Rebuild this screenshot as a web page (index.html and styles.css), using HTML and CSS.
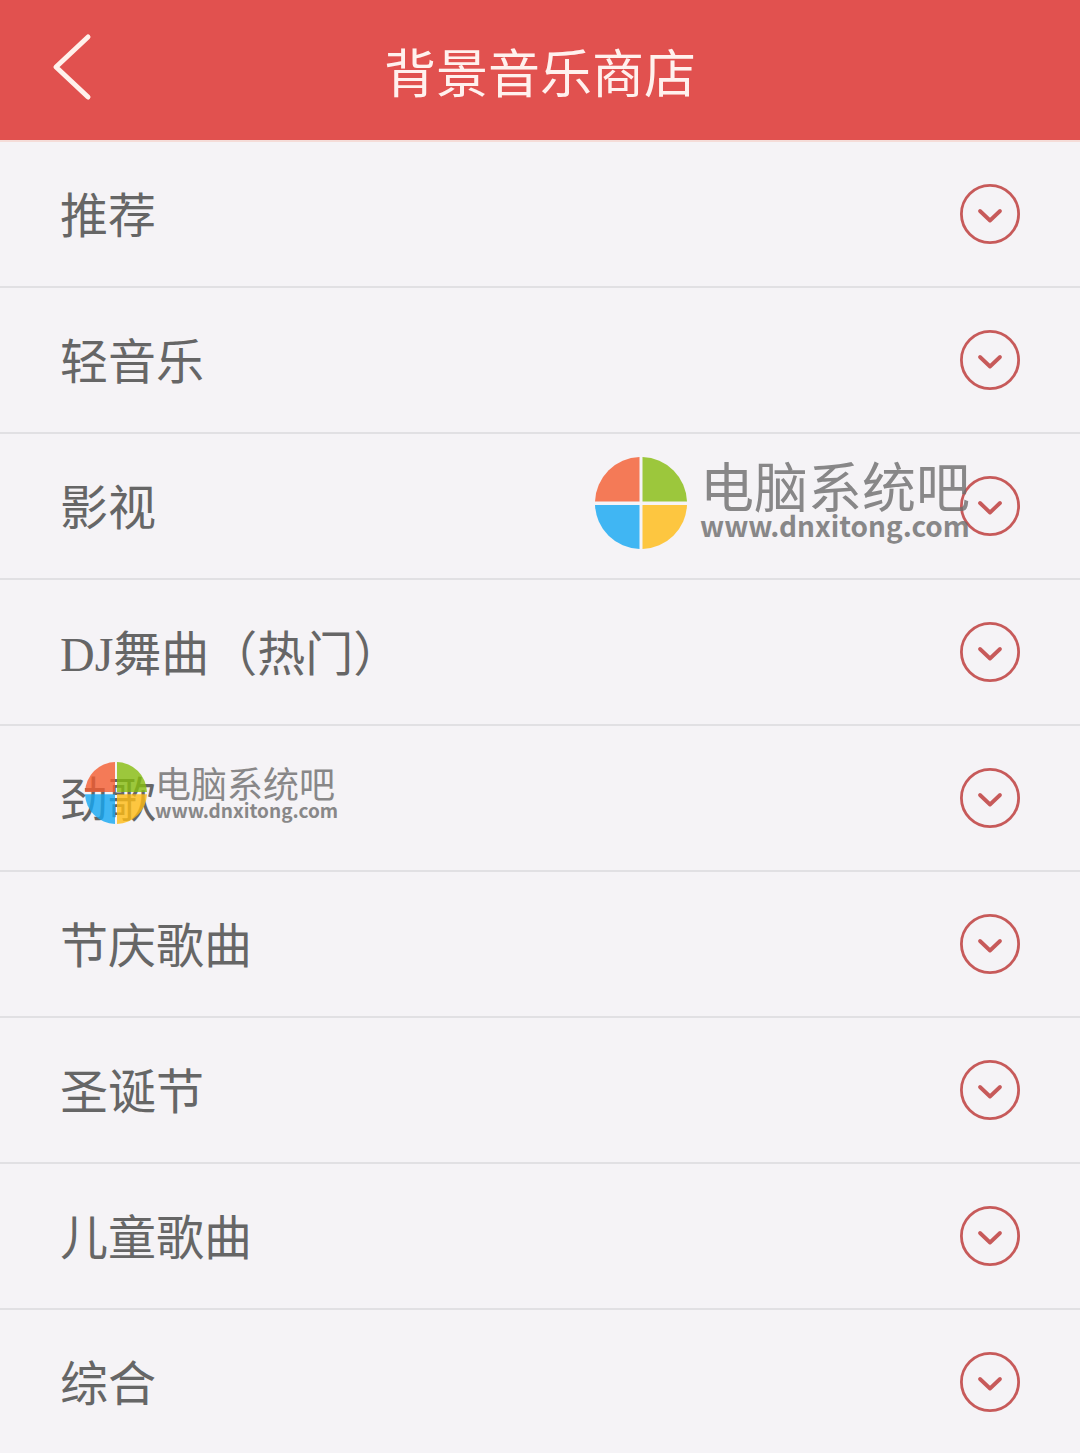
FILE: index.html
```html
<!DOCTYPE html>
<html lang="zh-CN">
<head>
    <meta charset="UTF-8">
    <meta name="viewport" content="width=device-width, initial-scale=1.0">
    <title>背景音乐商店</title>
    <link rel="stylesheet" href="styles.css">
</head>
<body>

    <!-- shared shapes -->
    <svg class="sprite" aria-hidden="true">
        <symbol id="down" viewBox="0 0 60 60">
            <circle cx="30" cy="30" r="28.6" fill="none" stroke="#c75a5a" stroke-width="2.8"/>
            <path d="M20 27l10 9.5L40 27" fill="none" stroke="#c75a5a" stroke-width="3.8" stroke-linecap="round" stroke-linejoin="round"/>
        </symbol>
        <symbol id="logo" viewBox="0 0 92 92">
            <path d="M44.5 44.5H0A46 46 0 0 1 44.5 0z" fill="#f45c30"/>
            <path d="M47.5 44.5V0A46 46 0 0 1 92 44.5z" fill="#86bd0e"/>
            <path d="M44.5 48V92A46 46 0 0 1 0 48z" fill="#14a8f3"/>
            <path d="M47.5 48H92A46 46 0 0 1 47.5 92z" fill="#ffbc13"/>
        </symbol>
    </svg>

    <header class="header">
        <a class="back" href="#" aria-label="返回">
            <svg viewBox="0 0 40 68" aria-hidden="true">
                <path d="M36 4L4 34l32 30" fill="none" stroke="#fff1ec" stroke-width="5" stroke-linecap="round" stroke-linejoin="round"/>
            </svg>
        </a>
        <h1 class="title">背景音乐商店</h1>
    </header>

    <main>
        <ul class="list">
            <li class="item">
                <button class="row" type="button">推荐<svg class="icon" aria-hidden="true"><use href="#down"/></svg></button>
            </li>
            <li class="item">
                <button class="row" type="button">轻音乐<svg class="icon" aria-hidden="true"><use href="#down"/></svg></button>
            </li>
            <li class="item">
                <button class="row" type="button">影视<svg class="icon" aria-hidden="true"><use href="#down"/></svg></button>
                <div class="mark mark--large">
                    <svg class="mark__logo" aria-hidden="true"><use href="#logo"/></svg>
                    <div class="mark__text">
                        <span class="mark__name">电脑系统吧</span>
                        <span class="mark__url">www.dnxitong.com</span>
                    </div>
                </div>
            </li>
            <li class="item">
                <button class="row" type="button">DJ舞曲（热门）<svg class="icon" aria-hidden="true"><use href="#down"/></svg></button>
            </li>
            <li class="item">
                <button class="row" type="button">劲歌<svg class="icon" aria-hidden="true"><use href="#down"/></svg></button>
                <div class="mark mark--small">
                    <svg class="mark__logo" aria-hidden="true"><use href="#logo"/></svg>
                    <div class="mark__text">
                        <span class="mark__name">电脑系统吧</span>
                        <span class="mark__url">www.dnxitong.com</span>
                    </div>
                </div>
            </li>
            <li class="item">
                <button class="row" type="button">节庆歌曲<svg class="icon" aria-hidden="true"><use href="#down"/></svg></button>
            </li>
            <li class="item">
                <button class="row" type="button">圣诞节<svg class="icon" aria-hidden="true"><use href="#down"/></svg></button>
            </li>
            <li class="item">
                <button class="row" type="button">儿童歌曲<svg class="icon" aria-hidden="true"><use href="#down"/></svg></button>
            </li>
            <li class="item">
                <button class="row" type="button">综合<svg class="icon" aria-hidden="true"><use href="#down"/></svg></button>
            </li>
        </ul>
    </main>

</body>
</html>
```

FILE: styles.css
```css
* {
    box-sizing: border-box;
}

body {
    margin: 0;
    background: #f5f3f6;
    color: #666;
    font-family: "Liberation Serif", "Noto Sans CJK SC", serif;
}

.sprite {
    display: none;
}

.header {
    display: grid;
    grid-template-columns: 1fr auto 1fr;
    align-items: start;
    padding: 33px 52px 21px;
    background: #e1514f;
    border-bottom: 2px solid #f5dcd8;
}

.back {
    width: 40px;
}

.back svg {
    display: block;
    width: 40px;
    height: 68px;
}

.title {
    margin: 0;
    color: #fff1ee;
    font-size: 52px;
    font-weight: 400;
    line-height: 86px;
}

.list {
    margin: 0;
    padding: 0;
    list-style: none;
}

.item {
    position: relative;
    border-bottom: 2px solid #e1e0e3;
}

.item:last-child {
    border-bottom: none;
}

.row {
    display: flex;
    align-items: flex-start;
    justify-content: space-between;
    width: 100%;
    padding: 42px 60px 36px;
    border: none;
    background: none;
    color: inherit;
    font: inherit;
    font-size: 48px;
    line-height: 66px;
    text-align: left;
    cursor: pointer;
}

.item:last-child .row {
    padding-bottom: 35px;
}

.icon {
    flex: none;
    width: 60px;
    height: 60px;
}

/* site mark lying over the rows */
.mark {
    position: absolute;
    display: flex;
    align-items: flex-start;
    color: #6d6d6d;
    font-family: "Noto Sans CJK SC", sans-serif;
    white-space: nowrap;
    opacity: 0.8;
    pointer-events: none;
}

.mark__logo {
    flex: none;
}

.mark__text {
    display: flex;
    flex-direction: column;
}

.mark__url {
    font-weight: 700;
}

.mark--large {
    top: 23px;
    right: 110px;
    gap: 13px;
}

.mark--large .mark__logo {
    width: 92px;
    height: 92px;
}

.mark--large .mark__name {
    font-size: 54px;
    line-height: 56px;
}

.mark--large .mark__url {
    font-size: 28px;
    line-height: 24px;
}

.mark--small {
    top: 36px;
    left: 85px;
    gap: 8px;
}

.mark--small .mark__logo {
    width: 62px;
    height: 62px;
}

.mark--small .mark__name {
    font-size: 36px;
    line-height: 40px;
}

.mark--small .mark__url {
    font-size: 19px;
    line-height: 16px;
}
```
